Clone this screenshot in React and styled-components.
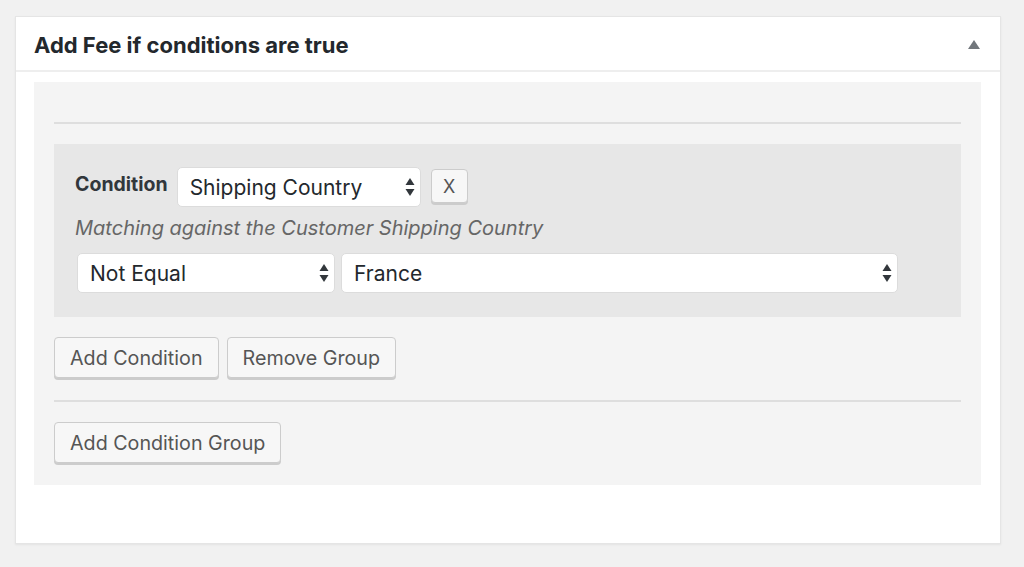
import React from "react";
import styled, { createGlobalStyle } from "styled-components";

const Global = createGlobalStyle`
  html, body { margin: 0; padding: 0; background: #f1f1f1; }
  body { font-family: Inter, "Open Sans", "Liberation Sans", sans-serif; }
  * { box-sizing: border-box; }
`;

const Page = styled.div`
  padding: 16px 23px 0 15px;
  height: 567px;
`;

const Panel = styled.div`
  width: 986px;
  height: 528px;
  background: #fff;
  border: 1px solid #e5e5e5;
  box-shadow: 0 1px 2px rgba(0, 0, 0, 0.06);
  display: flex;
  flex-direction: column;
`;

const Header = styled.div`
  height: 55px;
  border-bottom: 2px solid #eeeeee;
  display: flex;
  align-items: center;
  justify-content: space-between;
  padding: 0 20px 0 18px;
`;

const Title = styled.h2`
  margin: 0;
  font-size: 22px;
  font-weight: 700;
  color: #23282d;
  position: relative;
  top: 1px;
`;

const Toggle = styled.svg`
  width: 12px;
  height: 9px;
  display: block;
  margin-top: 2px;
`;

const Inside = styled.div`
  margin: 10px 19px 0 18px;
  background: #f4f4f4;
  padding: 40px 20px 22px 20px;
  display: flex;
  flex-direction: column;
`;

const Rule = styled.hr`
  margin: 0;
  border: 0;
  height: 2px;
  background: #dedede;
`;

const Group = styled.div`
  margin-top: 20px;
  background: #e7e7e7;
  padding: 23px 21px 24px 21px;
  display: flex;
  flex-direction: column;
`;

const Row = styled.div`
  display: flex;
  align-items: center;
  gap: ${(p) => p.$gap ?? 6}px;
  padding-left: ${(p) => p.$indent ?? 0}px;
`;

const Label = styled.span`
  font-size: 19.5px;
  font-weight: 700;
  color: #32373c;
  margin-right: 9px;
  position: relative;
  top: -3px;
`;

const SelectBox = styled.div`
  width: ${(p) => p.$w}px;
  height: 40px;
  background: #fff;
  border: 1px solid #dcdcdc;
  border-radius: 5px;
  display: flex;
  align-items: center;
  justify-content: space-between;
  padding: 0 5px 0 12px;
  font-size: 21px;
  color: #23282d;
`;

const Arrows = styled.svg`
  width: 10px;
  height: 19px;
  display: block;
`;

const Button = styled.button`
  font-family: inherit;
  font-size: ${(p) => p.$size || 19.7}px;
  color: #555;
  background: #f7f7f7;
  border: 1px solid #cccccc;
  border-radius: 4px;
  box-shadow: 0 2px 0 #cccccc;
  height: ${(p) => p.$h || 41}px;
  padding: 0 ${(p) => p.$pad ?? 15}px;
  margin: 0;
  cursor: pointer;
  white-space: nowrap;
  display: inline-flex;
  align-items: center;
  justify-content: center;
`;

const XButton = styled(Button)`
  width: 37px;
  margin-left: 10px;
  margin-top: -2px;
`;

const Hint = styled.p`
  margin: 10px 0 14px 0;
  font-size: 20px;
  font-style: italic;
  color: #666;
  line-height: 22px;
`;

const Actions = styled.div`
  display: flex;
  gap: 8px;
  margin: 20px 0 22px 0;
`;

const Footer = styled.div`
  margin-top: 20px;
  display: flex;
`;

function Select({ w, children }) {
  return (
    <SelectBox $w={w}>
      <span>{children}</span>
      <Arrows viewBox="0 0 10 19">
        <path d="M5 0 L9.5 7 L0.5 7 Z" fill="#32373c" />
        <path d="M0.5 11 L9.5 11 L5 18 Z" fill="#32373c" />
      </Arrows>
    </SelectBox>
  );
}

export default function App() {
  return (
    <>
      <Global />
      <Page>
        <Panel>
          <Header>
            <Title>Add Fee if conditions are true</Title>
            <Toggle viewBox="0 0 12 9">
              <path d="M6 0 L12 9 L0 9 Z" fill="#72777c" />
            </Toggle>
          </Header>
          <Inside>
            <Rule />
            <Group>
              <Row $gap={0}>
                <Label>Condition</Label>
                <Select w={244}>Shipping Country</Select>
                <XButton $size={18} $h={34} $pad={0}>
                  X
                </XButton>
              </Row>
              <Hint>Matching against the Customer Shipping Country</Hint>
              <Row $gap={6} $indent={2}>
                <Select w={258}>Not Equal</Select>
                <Select w={557}>France</Select>
              </Row>
            </Group>
            <Actions>
              <Button>Add Condition</Button>
              <Button>Remove Group</Button>
            </Actions>
            <Rule />
            <Footer>
              <Button>Add Condition Group</Button>
            </Footer>
          </Inside>
        </Panel>
      </Page>
    </>
  );
}
